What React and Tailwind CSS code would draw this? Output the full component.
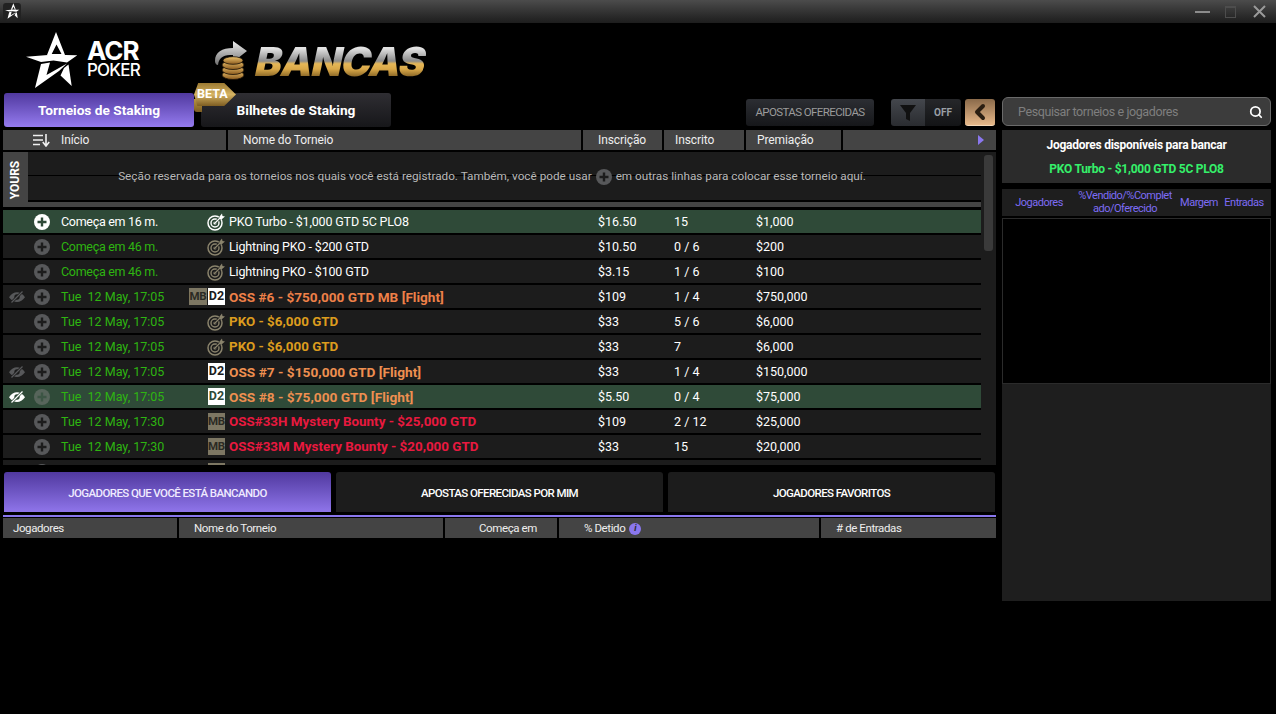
import { ChevronLeft, Search } from 'lucide-react';

const plainName = 'text-white tracking-[-0.17px]';
const rows = [
  { plus: 'white', start: 'Começa em 16 m.', startClass: 'text-white tracking-[-0.3px]', icon: 'target', name: 'PKO Turbo - $1,000 GTD 5C PLO8', nameClass: plainName, buyin: '$16.50', reg: '15', prize: '$1,000', active: true },
  { start: 'Começa em 46 m.', startClass: 'text-[#2eb511] tracking-[-0.3px]', icon: 'target', name: 'Lightning PKO - $200 GTD', nameClass: plainName, buyin: '$10.50', reg: '0 / 6', prize: '$200' },
  { start: 'Começa em 46 m.', startClass: 'text-[#2eb511] tracking-[-0.3px]', icon: 'target', name: 'Lightning PKO - $100 GTD', nameClass: plainName, buyin: '$3.15', reg: '1 / 6', prize: '$100' },
  { eye: true, start: 'Tue  12 May, 17:05', mb: true, d2: true, name: 'OSS #6 - $750,000 GTD MB [Flight]', nameClass: 'text-[#ee8048] text-[13.6px] font-bold', buyin: '$109', reg: '1 / 4', prize: '$750,000' },
  { start: 'Tue  12 May, 17:05', icon: 'target', name: 'PKO - $6,000 GTD', nameClass: 'text-[#dc9c1e] text-[13.4px] font-bold', buyin: '$33', reg: '5 / 6', prize: '$6,000' },
  { start: 'Tue  12 May, 17:05', icon: 'target', name: 'PKO - $6,000 GTD', nameClass: 'text-[#dc9c1e] text-[13.4px] font-bold', buyin: '$33', reg: '7', prize: '$6,000' },
  { eye: true, start: 'Tue  12 May, 17:05', d2: true, name: 'OSS #7 - $150,000 GTD [Flight]', nameClass: 'text-[#ee8f50] text-[13.7px] font-bold', buyin: '$33', reg: '1 / 4', prize: '$150,000' },
  { eye: 'white', plus: 'dim', start: 'Tue  12 May, 17:05', d2: true, name: 'OSS #8 - $75,000 GTD [Flight]', nameClass: 'text-[#ee8f50] text-[13.7px] font-bold', buyin: '$5.50', reg: '0 / 4', prize: '$75,000', active: true },
  { start: 'Tue  12 May, 17:30', mbRight: true, name: 'OSS#33H Mystery Bounty - $25,000 GTD', nameClass: 'text-[#e8193f] text-[13.4px] font-bold', buyin: '$109', reg: '2 / 12', prize: '$25,000' },
  { start: 'Tue  12 May, 17:30', mbRight: true, name: 'OSS#33M Mystery Bounty - $20,000 GTD', nameClass: 'text-[#e8193f] text-[13.4px] font-bold', buyin: '$33', reg: '15', prize: '$20,000' },
  { start: '', blank: true, name: '', nameClass: '', buyin: '', reg: '', prize: '' },
];

const PlusIcon = ({ size = 16, bg = '#57585a', fg = '#1c1c1c' }) => (
  <svg width={size} height={size} viewBox="0 0 16 16" className="shrink-0">
    <circle cx="8" cy="8" r="8" fill={bg} />
    <path d="M8 3.5v9M3.5 8h9" stroke={fg} strokeWidth="2.4" />
  </svg>
);

const EyeIcon = ({ color = '#57585a', bg = '#1c1c1c' }) => (
  <svg width="16" height="12" viewBox="0 0 16 12">
    <path d="M0 6.2C2.2 2.8 5 1.2 8 1.2s5.8 1.6 8 5c-2.2 3.2-5 4.8-8 4.8S2.2 9.400 0 6.2Z" fill={color} />
    <circle cx="8" cy="6" r="2.700" fill={bg} />
    <path d="M2.500 11.500 13.500 .5" stroke={bg} strokeWidth="2.600" />
    <path d="M2.500 11.500 13.500 .5" stroke={color} strokeWidth="1.300" />
  </svg>
);

const TargetIcon = ({ color, bg }) => (
  <svg width="18" height="18" viewBox="0 0 18 18" className="shrink-0">
    <circle cx="8" cy="10" r="7" fill="none" stroke={color} strokeWidth="1.500" />
    <circle cx="8" cy="10" r="4" fill="none" stroke={color} strokeWidth="1.400" />
    <circle cx="8" cy="10" r="1.600" fill={color} />
    <path d="M8 10 14.500 3.500" stroke={bg} strokeWidth="2.600" />
    <path d="M8 10 14.500 3.500" stroke={color} strokeWidth="1.200" />
    <path d="m12.500 3.500 2.500-3 .5 2.500 2.500.5-3 2.500h-2.500Z" fill={color} />
  </svg>
);

const Badge = ({ kind, active, wide }) =>
  kind === 'D2' ? (
    <span className={`flex h-[17px] w-[17px] items-center justify-center bg-white text-[12.5px] font-bold leading-none ${active ? 'text-[#2f4a38]' : 'text-[#1c1c1c]'}`}>D2</span>
  ) : (
    <span className={`flex h-[17px] items-center justify-center bg-[#7d7763] text-[11.5px] font-bold leading-none tracking-[-0.3px] text-[#2b2a24] ${wide ? 'w-[18px]' : 'w-[17px]'}`}>{kind}</span>
  );

const AcrStar = ({ size = 54 }) => (
  <svg width={size} height={size * 60 / 54} viewBox="0 0 54 60" className="shrink-0">
    <path fill="#fff" fillRule="evenodd" d="M30 1 39 24H21ZM30.500 13.500 25.700 23H35.500Z" />
    <path fill="#fff" d="M0 25.700 22 24H39L51.300 24.300 41 31.500 27.500 29.500 15 31Z" />
    <path fill="#fff" d="M15 33 24 31.500 20.500 44 41 32.500 33 40 9 57Z" />
    <path fill="#fff" d="M38 37 42.500 33.500 45.700 55 34.500 44.500Z" />
  </svg>
);

const CoinsArrow = () => (
  <svg width="40" height="42" viewBox="0 0 40 42" className="shrink-0">
    <defs>
      <linearGradient id="arrowFill" x1="0" y1="0" x2="0" y2="1">
        <stop offset="0" stopColor="#eeeeee" />
        <stop offset="1" stopColor="#707070" />
      </linearGradient>
      <linearGradient id="coinFill" x1="0" y1="0" x2="0" y2="1">
        <stop offset="0" stopColor="#f0c670" />
        <stop offset="1" stopColor="#8a5a1e" />
      </linearGradient>
    </defs>
    <path d="M1 22C1 13 8 9 19 9V2l14 10-14 11v-7C11 16 5 17 4 26 2 26 1 24 1 22Z" fill="url(#arrowFill)" />
    <g fill="url(#coinFill)" stroke="#1b1206" strokeWidth=".8">
      <ellipse cx="19" cy="36" rx="11" ry="4.500" />
      <ellipse cx="19" cy="31" rx="11" ry="4.500" />
      <ellipse cx="19" cy="26" rx="11" ry="4.500" />
      <ellipse cx="19" cy="21.500" rx="10" ry="3.800" />
    </g>
  </svg>
);

const Row = ({ r }) => {
  const plus = r.plus === 'white' ? <PlusIcon bg="#ffffff" fg="#2f4a38" /> : r.plus === 'dim' ? <PlusIcon bg="#57655b" fg="#3c5544" /> : <PlusIcon />;
  const rowBg = r.active ? '#2f4a38' : '#1c1c1c';
  return (
    <div className={`flex h-[23px] shrink-0 items-center text-[12.5px] ${r.active ? 'bg-[#2f4a38]' : 'bg-[#1c1c1c]'}`}>
      <div className="flex w-[23px] justify-end pr-[1px]">
        {r.eye && <EyeIcon color={r.eye === 'white' ? '#ffffff' : '#57585a'} bg={rowBg} />}
      </div>
      <div className="ml-[8px] w-[16px]">{plus}</div>
      <div className={`ml-[11px] mt-[2px] w-[128px] whitespace-pre ${r.startClass || 'text-[#2eb511]'}`}>{r.start}</div>
      <div className="flex w-[36px] items-center justify-end gap-[1px]">
        {r.mb && <Badge kind="MB" wide />}
        {r.d2 && <Badge kind="D2" active={r.active} />}
        {r.mbRight && <Badge kind="MB" />}
        {r.blank && <Badge kind="" />}
        {r.icon === 'target' && <TargetIcon color={r.active ? '#ffffff' : '#8a836c'} bg={rowBg} />}
      </div>
      <div className={`ml-[4px] mt-[2px] w-[369px] whitespace-nowrap ${r.nameClass}`}>{r.name}</div>
      <div className="mt-[2px] w-[76px] text-white">{r.buyin}</div>
      <div className="mt-[2px] w-[82px] text-white">{r.reg}</div>
      <div className="mt-[2px] text-white">{r.prize}</div>
    </div>
  );
};

const HeadCell = ({ className = '', children }) => (
  <div className={`flex h-full items-center bg-[#444444] text-[#eeeeee] ${className}`}>{children}</div>
);

export default function App() {
  return (
    <div className="flex h-[714px] w-[1276px] flex-col overflow-hidden bg-black font-['Roboto',sans-serif]">
      {/* title bar */}
      <div className="flex h-[23px] shrink-0 items-center justify-between bg-gradient-to-b from-[#4c4c4c] to-[#1d1d1d] pl-[3px] pr-[10px]">
        <div className="flex h-[18px] w-[18px] items-center justify-center rounded-[3px] bg-[#222222]">
          <AcrStar size={15} />
        </div>
        <div className="flex items-center">
          <div className="h-[2px] w-[15px] bg-[#8c8c8c]" />
          <div className="ml-[15px] h-[12px] w-[11px] border border-t-2 border-[#4d4d4d]" />
          <svg width="13" height="13" viewBox="0 0 13 13" className="ml-[17px]"><path d="m1 1 11 11M12 1 1 12" stroke="#9a9a9a" strokeWidth="2" /></svg>
        </div>
      </div>

      {/* logos */}
      <div className="flex h-[70px] shrink-0 items-start">
        <div className="ml-[26px] mt-[8px]"><AcrStar /></div>
        <div className="ml-[7px] mt-[17px] flex flex-col font-['Inter',sans-serif] text-white">
          <span className="text-[26px] font-bold leading-[22px] tracking-[-1px]">ACR</span>
          <span className="text-[17px] font-medium leading-[16px] tracking-[-0.8px]">POKER</span>
        </div>
        <div className="ml-[74px] mt-[16px]"><CoinsArrow /></div>
        <div className="ml-[2px] mt-[19px] -skew-x-12 bg-[linear-gradient(180deg,#e2e2e2_16%,#8a8a8a_48%,#e6b858_54%,#d9a848_68%,#7a5a20_90%)] bg-clip-text font-['Inter',sans-serif] text-[40px] font-black leading-[40px] tracking-[-1px] text-transparent">BANCAS</div>
      </div>

      <div className="flex min-h-0 flex-1">
        {/* left column */}
        <div className="ml-[3px] flex w-[993px] shrink-0 flex-col">
          <div className="relative flex h-[37px] shrink-0 items-start pl-[1px]">
            <div className="flex h-[34px] w-[190px] items-center justify-center rounded-[3px] bg-gradient-to-b from-[#51399f] to-[#957bef] text-[13.7px] font-bold text-white">Torneios de Staking</div>
            <div className="absolute left-[191px] top-[6px] h-[13px] w-[8px] rounded-bl-[3px] bg-gradient-to-b from-[#b8953f] to-[#7d5d22]" />
            <div className="ml-[7px] flex h-[34px] w-[190px] items-center justify-center rounded-[3px] bg-gradient-to-b from-[#2f2e33] to-[#17171a] text-[13.7px] font-bold text-white">Bilhetes de Staking</div>
            <div className="absolute left-[191px] top-[-10px] flex h-[23px] w-[42px] items-center bg-gradient-to-b from-[#9c7a32] via-[#d6b463] to-[#7d5d22] pl-[3px] text-[12.5px] font-bold text-white [clip-path:polygon(10%_0,72%_0,100%_50%,72%_100%,8%_100%,0_50%)]">BETA</div>
            <div className="ml-auto mr-[122px] mt-[6px] flex h-[27px] w-[128px] items-center justify-center rounded-[3px] bg-gradient-to-b from-[#2c2e33] to-[#16171a] text-[11.5px] tracking-[-0.6px] text-[#9b9b9b]">APOSTAS OFERECIDAS</div>
            <div className="absolute left-[888px] top-[6px] flex h-[27px] w-[70px] overflow-hidden rounded-[3px]">
              <div className="flex w-[34px] items-center justify-center bg-gradient-to-b from-[#44474d] to-[#2a2c30]">
                <svg width="16" height="18" viewBox="0 0 16 18"><path d="M0 1h16L10 9v8l-4-2V9Z" fill="#111111" /></svg>
              </div>
              <div className="flex flex-1 items-center justify-center bg-gradient-to-b from-[#26272a] to-[#131416] text-[10px] font-bold text-[#9aa0a6]">OFF</div>
            </div>
            <div className="absolute left-[962px] top-[6px] flex h-[27px] w-[30px] items-center justify-center rounded-[3px] border-b border-[#f5d8b8] bg-gradient-to-b from-[#8a6a4a] to-[#e8b98a]">
              <ChevronLeft size={24} strokeWidth={4} color="#2a1e12" />
            </div>
          </div>

          <div className="flex h-[20px] shrink-0 gap-[2px] text-[12px] tracking-[-0.1px]">
            <HeadCell className="w-[223px] pl-[30px]">
              <svg width="17" height="13" viewBox="0 0 17 13" className="mr-[11px]"><path d="M0 1.500h10M0 6h10M0 10.500h7M13 0v11M9.800 8l3.200 4 3.200-4" stroke="#f0f0f0" strokeWidth="1.600" fill="none" /></svg>
              Início
            </HeadCell>
            <HeadCell className="w-[353px] pl-[15px]">Nome do Torneio</HeadCell>
            <HeadCell className="w-[79px] pl-[15px]">Inscrição</HeadCell>
            <HeadCell className="w-[80px] pl-[11px]">Inscrito</HeadCell>
            <HeadCell className="w-[95px] pl-[11px]">Premiação</HeadCell>
            <HeadCell className="flex-1 justify-end pr-[12px]">
              <svg width="6" height="10" viewBox="0 0 6 10"><path d="M0 0 6 5 0 10Z" fill="#8a77ee" /></svg>
            </HeadCell>
          </div>

          {/* table body */}
          <div className="mt-[2px] flex h-[313px] shrink-0 overflow-hidden bg-[#1c1c1c]">
            <div className="flex w-[978px] shrink-0 flex-col bg-black">
              <div className="flex h-[55px] shrink-0">
                <div className="flex w-[25px] shrink-0 items-center justify-center bg-[#444444]">
                  <span className="-rotate-90 text-[12px] font-bold text-white">YOURS</span>
                </div>
                <div className="flex flex-1 flex-col">
                  <div className="relative flex h-[48px] items-center justify-center bg-[#1c1c1c] pr-[25px] pt-[2px] text-[11.75px] text-[#b9b9b9]">
                    <div className="absolute inset-x-0 top-[23px] h-[1px] bg-black" />
                    <span className="relative flex items-center gap-[4px]">
                      Seção reservada para os torneios nos quais você está registrado. Também, você pode usar
                      <PlusIcon size={16} fg="#1c1c1c" />
                      em outras linhas para colocar esse torneio aquí.
                    </span>
                  </div>
                  <div className="mt-[2px] h-[5px] bg-[#444444]" />
                </div>
              </div>
              <div className="mt-[3px] flex flex-col gap-[2px]">
                {rows.map((r, i) => <Row key={i} r={r} />)}
              </div>
            </div>
            <div className="ml-[3px] mt-[3px] h-[96px] w-[9px] rounded-[3px] bg-[#3a3a3a]" />
          </div>

          {/* bottom tabs */}
          <div className="mt-[7px] flex h-[40px] shrink-0 gap-[5px] pl-[1px] text-[11.5px] font-medium tracking-[-0.6px]">
            <div className="flex w-[327px] items-center justify-center rounded-t-[3px] bg-gradient-to-b from-[#51399f] to-[#8f75ea] pt-[3px] text-[#efeaff]">JOGADORES QUE VOCÊ ESTÁ BANCANDO</div>
            <div className="flex w-[327px] items-center justify-center rounded-t-[3px] bg-[#1c1c1c] pt-[3px] text-white">APOSTAS OFERECIDAS POR MIM</div>
            <div className="flex w-[327px] items-center justify-center rounded-t-[3px] bg-[#1c1c1c] pt-[3px] text-white">JOGADORES FAVORITOS</div>
          </div>
          <div className="mt-[3px] h-[2px] shrink-0 bg-[#8a77ee]" />
          <div className="mt-[1px] flex h-[20px] shrink-0 gap-[2px] text-[11.5px] tracking-[-0.4px]">
            <HeadCell className="w-[174px] pl-[10px] pt-[2px]">Jogadores</HeadCell>
            <HeadCell className="w-[264px] pl-[15px] pt-[2px]">Nome do Torneio</HeadCell>
            <HeadCell className="w-[112px] pl-[34px] pt-[2px]">Começa em</HeadCell>
            <HeadCell className="w-[260px] gap-[4px] pl-[25px] pt-[2px]">
              % Detido
              <span className="flex h-[12px] w-[12px] items-center justify-center rounded-full bg-[#8a77ee] text-[9px] font-bold italic text-[#2a2a2a]">i</span>
            </HeadCell>
            <HeadCell className="flex-1 pl-[15px] pt-[2px]">
              # de Entradas
            </HeadCell>
          </div>
        </div>

        {/* right column */}
        <div className="ml-[6px] flex w-[269px] shrink-0 flex-col">
          <div className="mt-[4px] flex h-[29px] shrink-0 items-center justify-between rounded-[6px] border border-[#6a6a6a] bg-[#3c3c3c] pl-[15px] pr-[7px]">
            <span className="mt-[2px] text-[12.5px] tracking-[-0.4px] text-[#7f7f7f]">Pesquisar torneios e jogadores</span>
            <Search size={14} strokeWidth={3} color="#ffffff" />
          </div>
          <div className="mt-[4px] flex h-[53px] shrink-0 flex-col items-center bg-[#2b2b2b] pt-[8px] text-[12px] font-bold tracking-[-0.25px]">
            <div className="leading-[14px] text-white">Jogadores disponíveis para bancar</div>
            <div className="mt-[10px] leading-[14px] text-[#35f06a]">PKO Turbo - $1,000 GTD 5C PLO8</div>
          </div>
          <div className="mt-[6px] flex h-[27px] shrink-0 items-center bg-[#1e1e1e] pb-[1px] text-center text-[11px] leading-[13px] tracking-[-0.5px] text-[#7d6cf5]">
            <div className="w-[74px]">Jogadores</div>
            <div className="w-[98px] break-all">%Vendido/%Completado/Oferecido</div>
            <div className="w-[50px]">Margem</div>
            <div className="w-[40px]">Entradas</div>
          </div>
          <div className="mt-[2px] h-[166px] shrink-0 border border-[#2b2b2b] bg-black" />
          <div className="h-[217px] shrink-0 bg-[#1e1e1e]" />
        </div>
      </div>
    </div>
  );
}
